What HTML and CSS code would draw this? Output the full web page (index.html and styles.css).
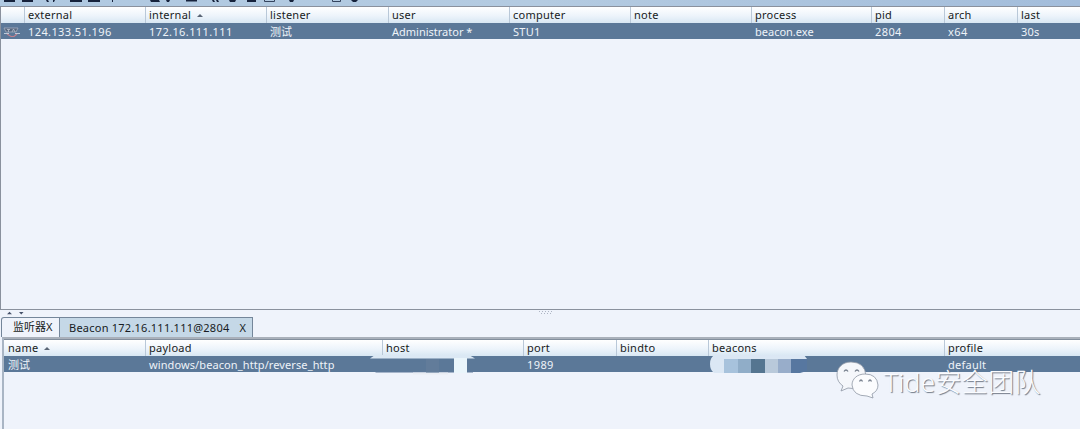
FILE: index.html
```html
<!DOCTYPE html>
<html lang="zh">
<head>
<meta charset="utf-8">
<title>Beacon console</title>
<link rel="stylesheet" href="styles.css">
</head>
<body>
<div class="toolbar">
<svg width="370" height="6" viewBox="0 0 370 6"><g fill="#17233c"><path d="M4 0h11v2H4zM22 0h11v2H22zM46 0h2l1 2h-2zM53 0h2l-1 2h-1zM70 0h12v2H70zM88 0h12v2H88zM112 0h1v2h-1zM150 0h9l1 2h-9zM166 0h4l-1 2h-2zM186 0h11v1.500h-11zM212 0h2l1 2h-2zM216 0h2l1 2h-2zM229 0h7l-1 2h-5zM247 0h9v2h-9zM289 0h5l-1 2h-3zM351 0h7l-2 2h-3z"/></g><path d="M264.500 0v1.500h10V0M332.500 0v1.500h8V0" fill="none" stroke="#34435d"/></svg>
</div>
<section class="sessions">
<div class="row head cols-top"><span></span><span>external</span><span>internal<i class="sort"></i></span><span>listener</span><span>user</span><span>computer</span><span>note</span><span>process</span><span>pid</span><span>arch</span><span>last</span></div>
<div class="row selected cols-top"><span class="host-icon"><svg width="18" height="12" viewBox="0 0 18 12"><path d="M1 2h14l-2 4H3z" fill="#56677f" stroke="#a4acbd" stroke-width=".8"/><path d="M4 3.500h3M5.500 3.500V6M9 6l1.500-3L12 6" fill="none" stroke="#b9c0cd" stroke-width=".8"/><path d="M4 8l4 2.500h3L14 8" fill="none" stroke="#c0818f" stroke-width="1.200"/><path d="M12 7.500h5M1 7.500h5" stroke="#bdc9d8"/></svg></span><span class="num">124.133.51.196</span><span class="num">172.16.111.111</span><span class="cjk">测试</span><span class="tight">Administrator *</span><span>STU1</span><span></span><span class="tight">beacon.exe</span><span class="num">2804</span><span class="num">x64</span><span>30s</span></div>
</section>
<div class="divider">
<svg class="arrows" width="26" height="6" viewBox="0 0 26 6"><path d="M7 4.200l2.500-2.400L12 4.200zM19 2h4.500l-2.200 2.400z" fill="#45516a"/></svg>
<svg class="grip" width="16" height="5" viewBox="0 0 16 5"><path d="M1 1.500h1m2 0h1m2 0h1m2 0h1m2 0h1M3 3.500h1m2 0h1m2 0h1m2 0h1" stroke="#aeb5c4" fill="none"/></svg>
</div>
<nav class="tabs"><div class="tab active">监听器X</div><div class="tab idle"><span>Beacon 172.16.111.111@2804</span><b>X</b></div></nav>
<section class="listeners">
<div class="row head cols-bottom"><span>name<i class="sort"></i></span><span>payload</span><span>host</span><span>port</span><span>bindto</span><span>beacons</span><span>profile</span></div>
<div class="row selected cols-bottom"><span class="cjk">测试</span><span class="payload">windows/beacon_http/reverse_http</span><span></span><span class="num">1989</span><span></span><span></span><span>default</span></div>
<svg class="mask host-mask" width="108" height="22" viewBox="0 0 108 22"><path d="M1 3.500L6 0H100L106 3.500z" fill="#dbe8f4"/><path d="M5 16.500h99v1H7z" fill="#5e7999"/><path d="M44 17.500h35v2H44z" fill="#e9edf4"/><path d="M57 4h13v13.500H57z" fill="#627c9a"/><path d="M85 3h13v15H85z" fill="#eaf5fb"/></svg>
<svg class="mask beacon-mask" width="98" height="20" viewBox="0 0 98 20"><path d="M5 0H94l3 4H82v14H4Q0 15 0 9Q0 2 5 0" fill="#dbe7f4"/><path d="M14 4h14v14H14z" fill="#a7c2dc"/><path d="M28 4h13v14H28z" fill="#90adc8"/><path d="M41 4h14v14H41z" fill="#557590"/><path d="M55 4h13v14H55z" fill="#b9c9da"/><path d="M68 4h13v14H68z" fill="#98adca"/><path d="M81 4h16v12l-7 2h-9z" fill="#5777a0"/></svg>
</section>
<div class="watermark">
<svg width="44" height="38" viewBox="0 0 44 38"><g stroke="#8d96a3" stroke-width=".8"><path d="M15 1C6 1 1 7 1 14q0 7 6 11l-2 5 7-3q17 4 18-12Q29 1 15 1" fill="#f5f7fb"/><path d="M29 13C21 13 16 18 16 24q1 11 15 11l6 2-1-4q6-3 6-9Q41 13 29 13" fill="#fbfcfe"/></g><g fill="none" stroke="#77808e" stroke-width="1.300"><path d="M8 10.500q2-3 4 0M19 10.500q2-3 4 0M23.500 20.500q1.500-3 3 0M32.500 20.500q1.500-3 3 0"/></g></svg>
<span>Tide安全团队</span>
</div>
</body>
</html>
```
FILE: styles.css
```css
* { box-sizing: border-box; }
body {
  margin: 0;
  width: 1080px;
  height: 429px;
  overflow: hidden;
  position: relative;
  display: flex;
  flex-direction: column;
  background: #eff3fb;
  color: #171b22;
  font: 11px/16px "Noto Sans", "Noto Sans CJK SC", sans-serif;
  letter-spacing: .25px;
}
.toolbar { height: 6px; flex: none; background: linear-gradient(90deg, #b0c9e1, #b4cbe1 50%, #a3bddb); }
.toolbar svg { display: block; }
.sessions { height: 304px; flex: none; border: solid #8a919d; border-width: 1px 0 1px 1px; }
.row { display: grid; white-space: nowrap; }
.row span { padding-left: 4px; overflow: hidden; }
.cols-top { grid-template-columns: 23px 121px 121px 122px 121px 121px 121px 120px 73px 73px 64px; }
.head { height: 16px; background: linear-gradient(#fff, #edf4fb 55%, #d8e7f3); }
.head span + span { border-left: 1px solid #b9c8d8; padding-left: 3px; }
.selected { height: 16px; background: #5b7898; color: #eef3f8; line-height: 17px; }
.selected .host-icon { padding: 3px 0 0 2px; }
.host-icon svg { display: block; }
.num { letter-spacing: .4px; }
.tight { letter-spacing: 0; }
.cjk { font-family: "Noto Sans CJK SC", sans-serif; letter-spacing: 0; }
.sort { display: inline-block; margin: 0 0 2px 6px; border: solid transparent; border-width: 0 3.5px 3px; border-bottom-color: #596575; }
.divider { height: 7px; flex: none; position: relative; }
.arrows, .grip { position: absolute; left: 0; top: 0; }
.grip { left: 538px; }
.tabs { height: 20px; flex: none; display: flex; padding-left: 1px; align-items: stretch; }
.tab { border: 1px solid #74869a; border-bottom: 0; }
.active { width: 59px; padding: 1px 0 0 11px; border-radius: 3px 0 0; letter-spacing: 0; }
.idle { width: 193px; background: #c5d8e7; padding: 2px 0 0 9px; border-left: 0; display: flex; gap: 10px; letter-spacing: .24px; }
.idle b { font-weight: 400; }
.listeners { flex: 1; position: relative; border-left: 2px solid #a9b5c4; border-top: 2px solid #a9b0ba; margin-left: 2px; }
.listeners .head { border-top: 1px solid #828e9d; height: 17px; line-height: 15px; }
.cols-bottom { grid-template-columns: 141px 237px 141px 93px 92px 236px 136px; }
.payload { letter-spacing: .1px; }
.mask { position: absolute; }
.host-mask { left: 365px; top: 16px; }
.beacon-mask { left: 706px; top: 16px; }
.watermark { position: absolute; left: 836px; top: 361px; display: flex; gap: 4px; font: 300 26px/43px "Noto Sans", "Noto Sans CJK SC", sans-serif; letter-spacing: .4px; color: #fbfcff; text-shadow: 1px 1px 1px #6d7683; white-space: nowrap; }
```
